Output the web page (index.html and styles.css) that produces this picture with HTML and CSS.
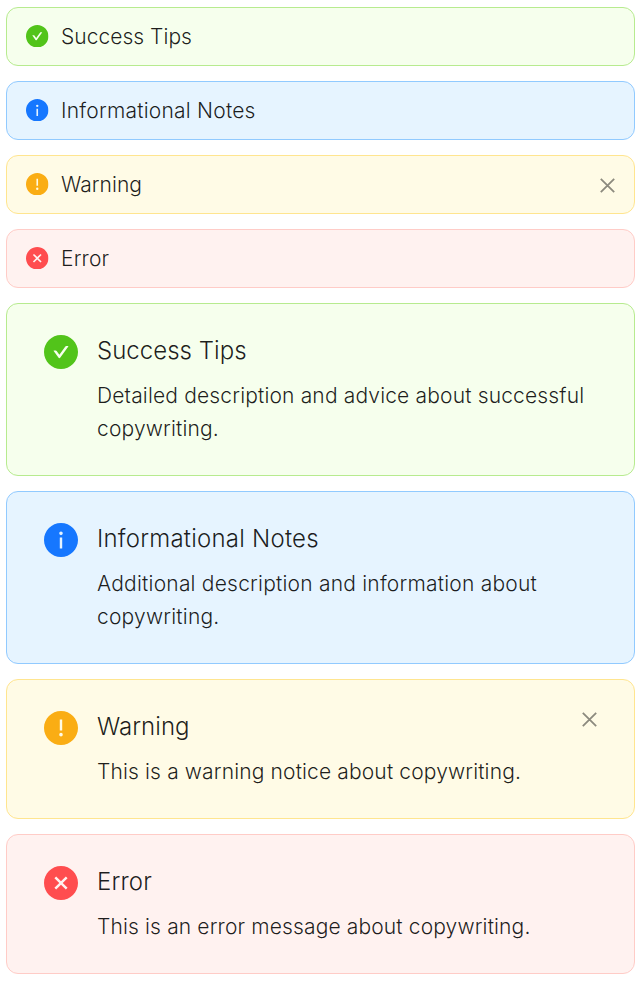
FILE: index.html
```html
<!DOCTYPE html>
<html lang="en">
<head>
<meta charset="utf-8">
<title>Alerts</title>
<link rel="stylesheet" href="styles.css">
</head>
<body>
<svg class="defs" aria-hidden="true">
  <symbol id="success" viewBox="64 64 896 896"><path d="M512 64C264.600 64 64 264.600 64 512s200.600 448 448 448 448-200.600 448-448S759.400 64 512 64zm193.500 301.700l-210.600 292a31.800 31.800 0 01-51.700 0L318.500 484.900c-3.800-5.300 0-12.700 6.500-12.700h46.900c10.200 0 19.900 4.900 25.900 13.300l71.200 98.800 157.200-218c6-8.300 15.600-13.300 25.900-13.300H699c6.500 0 10.300 7.400 6.500 12.700z"/></symbol>
  <symbol id="info" viewBox="64 64 896 896"><path d="M512 64C264.600 64 64 264.600 64 512s200.600 448 448 448 448-200.600 448-448S759.400 64 512 64zm32 664c0 4.400-3.600 8-8 8h-48c-4.400 0-8-3.600-8-8V456c0-4.400 3.600-8 8-8h48c4.400 0 8 3.600 8 8v272zm-32-344a48.010 48.010 0 010-96 48.010 48.010 0 010 96z"/></symbol>
  <symbol id="warning" viewBox="64 64 896 896"><path d="M512 64C264.600 64 64 264.600 64 512s200.600 448 448 448 448-200.600 448-448S759.400 64 512 64zm-32 232c0-4.400 3.600-8 8-8h48c4.400 0 8 3.600 8 8v272c0 4.400-3.600 8-8 8h-48c-4.400 0-8-3.600-8-8V296zm32 440a48.010 48.010 0 010-96 48.010 48.010 0 010 96z"/></symbol>
  <symbol id="error" viewBox="64 64 896 896"><path fill-rule="evenodd" d="M512 64c247.400 0 448 200.600 448 448S759.400 960 512 960 64 759.400 64 512 264.600 64 512 64zm127.980 274.820h-.040l-.080.060L512 466.750 384.140 338.880c-.040-.050-.060-.060-.080-.060a.120.120 0 00-.070 0c-.030 0-.050.010-.090.050l-45.020 45.020a.200.200 0 00-.050.090.120.120 0 000 .070v.020a.270.270 0 00.060.060L466.750 512 338.880 639.860c-.050.040-.060.060-.060.080a.120.120 0 000 .070c0 .030.010.050.050.090l45.020 45.020a.200.200 0 00.090.050.120.120 0 00.070 0c.020 0 .040-.010.080-.050L512 557.250l127.860 127.870c.040.040.060.050.080.050a.120.120 0 00.070 0c.030 0 .050-.010.090-.050l45.020-45.020a.200.200 0 00.050-.090.120.120 0 000-.070v-.020a.270.270 0 00-.050-.060L557.250 512l127.870-127.860c.040-.040.050-.060.050-.080a.120.120 0 000-.070c0-.030-.010-.050-.050-.090l-45.020-45.020a.200.200 0 00-.090-.050.120.120 0 00-.070 0z"/></symbol>
  <symbol id="close" viewBox="0 0 15 15"><path d="M.8.8l13.400 13.400M14.200.8L.8 14.200" fill="none" stroke="currentColor" stroke-width="1.800"/></symbol>
</svg>
<main class="list">
  <div class="alert success"><svg class="icon"><use href="#success"/></svg><div class="message">Success Tips</div></div>
  <div class="alert info"><svg class="icon"><use href="#info"/></svg><div class="message">Informational Notes</div></div>
  <div class="alert warning"><svg class="icon"><use href="#warning"/></svg><div class="message">Warning</div><button class="close" aria-label="Close"><svg><use href="#close"/></svg></button></div>
  <div class="alert error"><svg class="icon"><use href="#error"/></svg><div class="message">Error</div></div>
  <div class="alert detailed success"><svg class="icon"><use href="#success"/></svg><div class="content"><div class="message">Success Tips</div><div class="description">Detailed description and advice about successful copywriting.</div></div></div>
  <div class="alert detailed info"><svg class="icon"><use href="#info"/></svg><div class="content"><div class="message">Informational Notes</div><div class="description">Additional description and information about copywriting.</div></div></div>
  <div class="alert detailed warning"><svg class="icon"><use href="#warning"/></svg><div class="content"><div class="message">Warning</div><div class="description">This is a warning notice about copywriting.</div></div><button class="close" aria-label="Close"><svg><use href="#close"/></svg></button></div>
  <div class="alert detailed error"><svg class="icon"><use href="#error"/></svg><div class="content"><div class="message">Error</div><div class="description">This is an error message about copywriting.</div></div></div>
</main>
</body>
</html>
```
FILE: styles.css
```css
* { box-sizing: border-box; }
body {
  margin: 0;
  background: #fff;
  color: rgba(0, 0, 0, 0.88);
  font: 330 21px/33px Inter, "Liberation Sans", sans-serif;
  font-optical-sizing: none;
}
.defs { position: absolute; width: 0; height: 0; }
.list {
  display: flex;
  flex-direction: column;
  gap: 15px;
  padding: 7px 7px 7px 6px;
}
.alert {
  display: flex;
  align-items: center;
  padding: 12px 19px;
  border: 1px solid;
  border-radius: 12px;
}
.message, .content { flex: 1; min-width: 0; }
.message { letter-spacing: 0.03px; }
.description { letter-spacing: 0.14px; }
.info .message { letter-spacing: 0.22px; }
.error .message { letter-spacing: 0.15px; }
.success .description { letter-spacing: 0.16px; }
.info .description { letter-spacing: 0.21px; }
.icon {
  flex: none;
  width: 22.5px;
  height: 22.5px;
  margin-right: 12.5px;
  fill: currentColor;
  position: relative;
  top: -0.5px;
}
.success { background: #f6ffed; border-color: #b7eb8f; }
.success .icon { color: #52c41a; }
.info { background: #e6f4ff; border-color: #91caff; }
.info .icon { color: #1677ff; }
.warning { background: #fffbe6; border-color: #ffe58f; }
.warning .icon { color: #faad14; }
.error { background: #fff2f0; border-color: #ffccc7; }
.error .icon { color: #ff4d4f; }
.close {
  flex: none;
  padding: 0;
  margin: 2px 0 0 12px;
  border: 0;
  background: none;
  color: rgba(0, 0, 0, 0.45);
  line-height: 0;
}
.close svg { display: block; width: 15px; height: 15px; }
.detailed {
  align-items: flex-start;
  padding: 30px 37px;
}
.detailed .icon {
  width: 34px;
  height: 34px;
  margin: 1px 19px 0 0;
  top: 0;
}
.detailed .message { font-size: 24px; margin-bottom: 12px; }
```
